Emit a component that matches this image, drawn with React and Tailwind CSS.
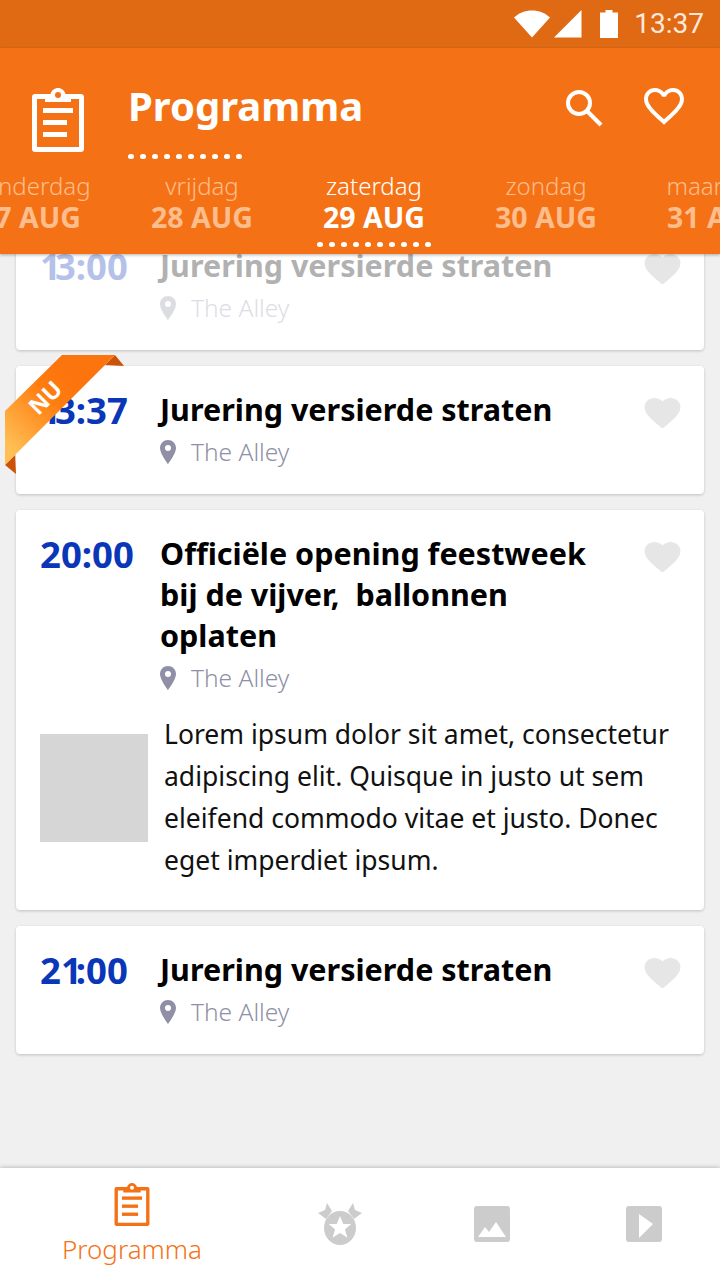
const FONT = "font-['Noto_Sans','Open_Sans',sans-serif]";
const HEART = "M12 21.35l-1.45-1.32C5.4 15.36 2 12.28 2 8.5 2 5.42 4.42 3 7.5 3c1.74 0 3.41.81 4.5 2.09C13.09 3.81 14.76 3 16.5 3 19.58 3 22 5.42 22 8.5c0 3.78-3.4 6.86-8.55 11.54L12 21.35z";
const HEART_O = "M16.5 3c-1.74 0-3.41.81-4.5 2.09C10.91 3.81 9.24 3 7.5 3 4.42 3 2 5.42 2 8.5c0 3.78 3.4 6.86 8.55 11.54L12 21.35l1.45-1.32C18.6 15.36 22 12.28 22 8.5 22 5.42 19.58 3 16.5 3zm-4.4 15.55l-.1.1-.1-.1C7.14 14.24 4 11.39 4 8.5 4 6.5 5.5 5 7.5 5c1.54 0 3.04.99 3.57 2.36h1.87C13.46 5.99 14.96 5 16.5 5c2 0 3.5 1.5 3.5 3.5 0 2.89-3.14 5.74-7.9 10.05z";

function Clipboard({ className }) {
  return (
    <svg viewBox="0 0 52 64" className={className} fill="currentColor">
      <path fillRule="evenodd" d="M3 6h15.5C19.5 2.5 22.500 0 26 0s6.500 2.500 7.500 6H49c1.700 0 3 1.300 3 3v52c0 1.700-1.300 3-3 3H3c-1.700 0-3-1.300-3-3V9c0-1.700 1.300-3 3-3zm2 5v48h42V11h-8v3H13v-3H5zm21-7a3 3 0 1 0 0 6 3 3 0 0 0 0-6z" />
      <rect x="11" y="20" width="30" height="5" />
      <rect x="11" y="32" width="24" height="5" />
      <rect x="11" y="44" width="24" height="5" />
    </svg>
  );
}

function Dots() {
  return (
    <div className="flex gap-[6px]">
      {[0, 1, 2, 3, 4, 5, 6, 7, 8, 9].map((i) => (
        <span key={i} className="h-[5px] w-[6px] rounded-full bg-white" />
      ))}
    </div>
  );
}

function StatusBar() {
  return (
    <div className="flex h-12 shrink-0 items-center justify-end bg-[#df6a13] pr-4">
      <svg viewBox="0 0 36 28" className="h-[28px] w-[36px]" fill="white">
        <path d="M0 7.500C5 3 11 .5 18 .5s13 2.500 18 7L18 27.500z" />
      </svg>
      <svg viewBox="0 0 28 28" className="ml-[4px] h-[28px] w-[28px]" fill="white">
        <path d="M0 27.500L27.500 0v27.500z" />
      </svg>
      <svg viewBox="0 0 18 28" className="ml-[18px] h-[28px] w-[18px]" fill="white">
        <path d="M0 2.500h5.500V0h7v2.500H18V28H0z" />
      </svg>
      <span className="ml-[16px] font-['Roboto',sans-serif] text-[28px] leading-none text-[#fbe8da]">13:37</span>
    </div>
  );
}

function Tab({ day, date, active }) {
  return (
    <div className={`flex w-[172px] shrink-0 flex-col items-center ${active ? "text-white" : "text-[#fdbd8d]"}`}>
      <span className="text-[24px] font-light leading-[30px]">{day}</span>
      <span className="text-[28.5px] font-bold leading-[32px]">{date}</span>
      {active ? <div className="mt-[9px]"><Dots /></div> : null}
    </div>
  );
}

function Header() {
  return (
    <header className="relative z-10 h-[206px] shrink-0 overflow-hidden bg-[#f47215] text-white shadow-[0_1px_3px_rgba(0,0,0,0.3)]">
      <div className="flex h-[123px] items-start">
        <Clipboard className="ml-8 mt-10 h-16 w-[52px] text-white" />
        <div className="ml-11 mt-[32px] flex-1">
          <h1 className="text-[40px] font-bold leading-[52px]">Programma</h1>
          <div className="mt-[22px]"><Dots /></div>
        </div>
        <svg viewBox="0 0 40 40" className="mt-[39px] h-10 w-10" fill="none" stroke="white" strokeWidth="4">
          <circle cx="15" cy="16" r="11" />
          <path d="M23 24l14 14" />
        </svg>
        <svg viewBox="0 0 24 24" className="ml-[36px] mr-8 mt-[34px] h-12 w-12" fill="white">
          <path d={HEART_O} />
        </svg>
      </div>
      <div className="ml-[-56px] flex">
        <Tab day="donderdag" date="27 AUG" />
        <Tab day="vrijdag" date="28 AUG" />
        <Tab day="zaterdag" date="29 AUG" active />
        <Tab day="zondag" date="30 AUG" />
        <Tab day="maandag" date="31 AUG" />
      </div>
    </header>
  );
}

function Ribbon() {
  return (
    <div className="absolute left-[-11px] top-[-11px] h-[120px] w-[120px]">
      <svg viewBox="0 0 120 120" className="h-full w-full">
        <defs>
          <linearGradient id="rib" x1="0.1" y1="0.9" x2="0.7" y2="0.3">
            <stop offset="0" stopColor="#ffbf55" />
            <stop offset="0.7" stopColor="#ff7c0f" />
            <stop offset="1" stopColor="#fb740d" />
          </linearGradient>
        </defs>
        <path d="M100 10L110 0l9 11z" fill="#cc5208" />
        <path d="M0 110l10-10 1 19z" fill="#cc5208" />
        <path d="M57 0h53L0 110V56z" fill="url(#rib)" />
      </svg>
      <span className="absolute left-[22px] top-[31px] -rotate-45 text-[23px] font-bold leading-none text-white">NU</span>
    </div>
  );
}

function One() {
  return <span className="tracking-[-6px]">1</span>;
}

function Card({ time, title, faded, now, children }) {
  return (
    <article className="relative rounded-[4px] bg-white px-6 pb-[24px] pt-[23px] shadow-[0_1px_3px_rgba(0,0,0,0.2)]">
      <div className="flex">
        <div className={`w-[120px] shrink-0 text-[36.5px] font-bold leading-[42px] text-[#0a36b8] ${faded ? "opacity-30" : ""}`}>{time}</div>
        <div className={`min-w-0 flex-1 ${faded ? "opacity-30" : ""}`}>
          <h2 className="w-[450px] text-[30.5px] font-bold leading-[41px] text-black">{title}</h2>
          <div className="mt-[4px] flex h-[36px] items-center text-[24.5px] font-light text-[#8f8fa6]">
            <svg viewBox="0 0 16 24" className="h-6 w-4" fill="#8f8fa6">
              <path fillRule="evenodd" d="M8 0c4.400 0 8 3.500 8 7.900C16 13.500 8 24 8 24S0 13.500 0 7.900C0 3.500 3.600 0 8 0zm0 5a3 3 0 1 0 0 6 3 3 0 0 0 0-6z" />
            </svg>
            <span className="ml-[15px]">The Alley</span>
          </div>
        </div>
        <svg viewBox="0 0 24 24" preserveAspectRatio="none" className="absolute right-[20px] top-[27px] h-[40px] w-[43px]" fill="#e6e6e6">
          <path d={HEART} />
        </svg>
      </div>
      {children}
      {now ? <Ribbon /> : null}
    </article>
  );
}

function Medal() {
  return (
    <svg viewBox="0 0 44 42" className="h-[42px] w-[44px]" fill="#cccccc">
      <path d="M9 0l5 8-6 8-8-6 7-3z" />
      <path d="M35 0l-5 8 6 8 8-6-7-3z" />
      <ellipse cx="22" cy="25" rx="16" ry="17" />
      <path fill="white" d="M22 13l3.200 8h8l-6.300 5.500 2.600 8.200L22 30l-7.500 4.700 2.600-8.200-6.300-5.500h8z" />
    </svg>
  );
}

function BottomNav() {
  return (
    <nav className="relative z-10 grid h-[112px] shrink-0 grid-cols-[264px_152px_152px_152px] bg-white shadow-[0_-1px_4px_rgba(0,0,0,0.2)]">
      <div className="flex flex-col items-center pt-[15px] text-[#f47215]">
        <Clipboard className="h-[43px] w-[36px]" />
        <span className="mt-[6px] text-[26px] font-light leading-[34px]">Programma</span>
      </div>
      <div className="flex justify-center pt-[35px]"><Medal /></div>
      <div className="flex justify-center pt-[38px]">
        <svg viewBox="0 0 36 36" className="h-9 w-9">
          <rect width="36" height="36" rx="3" fill="#cccccc" />
          <path d="M4 31l7-10 4 5 7-10 10 15z" fill="white" />
        </svg>
      </div>
      <div className="flex justify-center pt-[38px]">
        <svg viewBox="0 0 36 36" className="h-9 w-9">
          <rect width="36" height="36" rx="3" fill="#cccccc" />
          <path d="M13 8l14 10-14 14z" fill="white" />
        </svg>
      </div>
    </nav>
  );
}

export default function App() {
  return (
    <div className={`flex h-[1280px] w-[720px] flex-col overflow-hidden bg-[#f0f0f0] ${FONT}`}>
      <StatusBar />
      <Header />
      <main className="min-h-0 flex-1 overflow-hidden">
        <div className="-mt-8 flex flex-col gap-4 px-4">
          <Card time={<><One />3:00</>} title="Jurering versierde straten" faded />
          <Card time={<><One />3:37</>} title="Jurering versierde straten" now />
          <Card time="20:00" title={"Officiële opening feestweek bij de vijver,\u00a0 ballonnen oplaten"}>
            <div className="mb-[5px] mt-[17px] flex">
              <div className="mt-[21px] h-[108px] w-[108px] shrink-0 bg-[#d6d6d6]" />
              <p className="ml-4 text-[26.5px] leading-[42px] text-[#111]">
                Lorem ipsum dolor sit amet, consectetur adipiscing elit. Quisque in justo ut sem eleifend commodo vitae et justo. Donec eget imperdiet ipsum.
              </p>
            </div>
          </Card>
          <Card time={<>2<One />:00</>} title="Jurering versierde straten" />
        </div>
      </main>
      <BottomNav />
    </div>
  );
}
